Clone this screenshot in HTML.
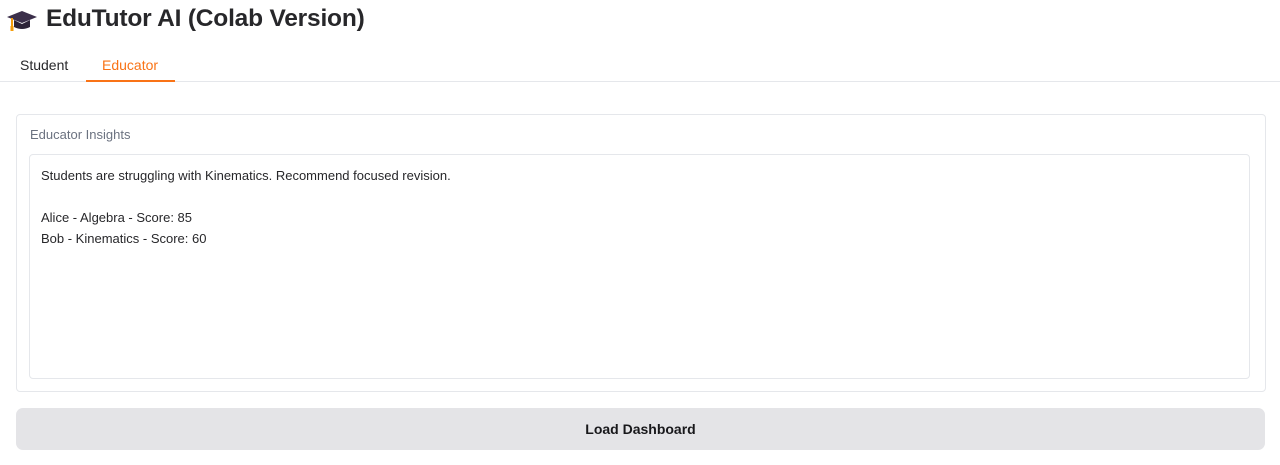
<!DOCTYPE html>
<html><head><style>
body{margin:0;width:1280px;height:465px;background:#fff;font-family:"Liberation Sans",sans-serif;color:#27272a;position:relative;overflow:hidden}
.t{position:absolute;left:46px;top:5px;font-size:24.5px;font-weight:bold;color:#27272a;letter-spacing:-0.2px}
.tabline{position:absolute;left:0;right:0;top:81px;height:1px;background:#e5e7eb}
.tab{position:absolute;top:57px;font-size:14px}
.ul{position:absolute;left:86px;width:89px;top:80px;height:2px;background:#f97316}
.panel{position:absolute;left:16px;top:114px;width:1248px;height:276px;border:1px solid #e5e7eb;border-radius:4px}
.lbl{position:absolute;left:13px;top:12px;font-size:13px;color:#6b7280}
.ta{position:absolute;left:12px;top:39px;width:1221px;height:225px;border:1px solid #e5e7eb;border-radius:4px;font-size:13px;line-height:21px;padding:10px 11px;box-sizing:border-box;color:#27272a}
.btn{position:absolute;left:16px;top:408px;width:1249px;height:42px;background:#e4e4e7;border-radius:7px;text-align:center;line-height:42px;font-weight:bold;font-size:14px;color:#18181b}
</style></head><body>
<svg style="position:absolute;left:6px;top:8px" width="32" height="26" viewBox="0 0 32 26">
<path d="M1 9 L16 3 L31 9 L16 15 Z" fill="#3b2f4a"/>
<path d="M8 12 L8 19 Q16 23 24 19 L24 12 L16 16 Z" fill="#2d2438"/>
<path d="M6 10 L6 19" stroke="#f59e0b" stroke-width="2"/>
<rect x="4.5" y="18" width="3" height="5" fill="#f59e0b"/>
</svg>
<div class="t">EduTutor AI (Colab Version)</div>
<div class="tab" style="left:20px">Student</div>
<div class="tab" style="left:102px;color:#f97316">Educator</div>
<div class="tabline"></div><div class="ul"></div>
<div class="panel"><div class="lbl">Educator Insights</div>
<div class="ta">Students are struggling with Kinematics. Recommend focused revision.<br><br>Alice - Algebra - Score: 85<br>Bob - Kinematics - Score: 60</div></div>
<div class="btn">Load Dashboard</div>
</body></html>
